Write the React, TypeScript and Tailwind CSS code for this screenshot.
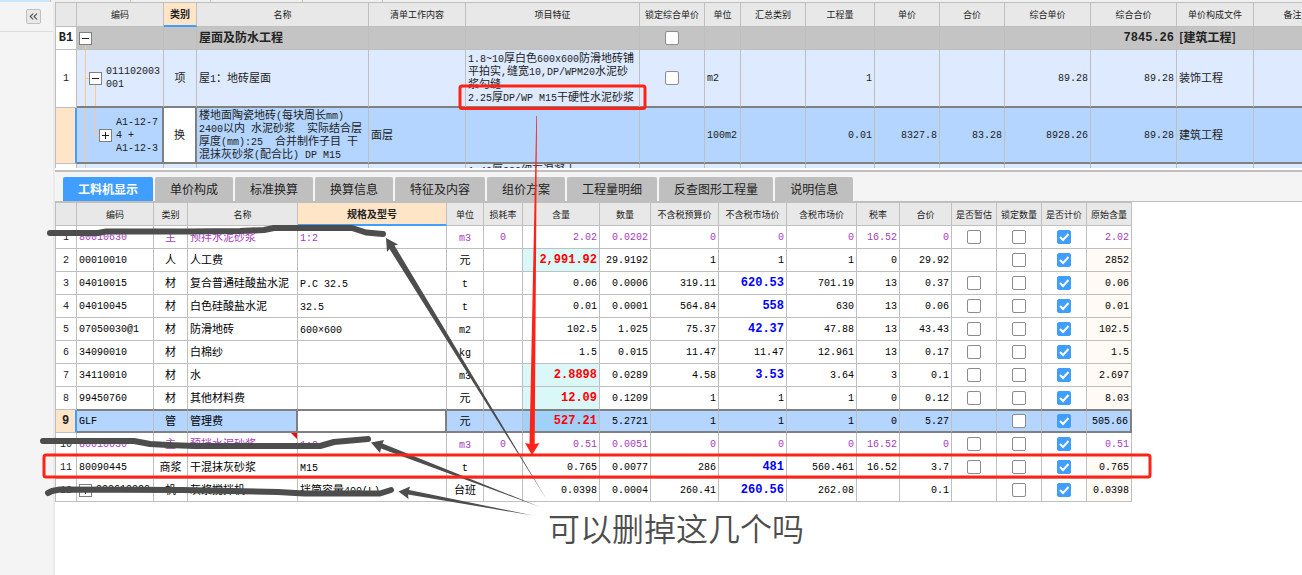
import { useState, type ReactNode } from 'react';
import clsx from 'clsx';
import { ChevronsLeft } from 'lucide-react';

type Column = { title: string; width: string; active?: boolean };

type Material = {
  no: number;
  code: string;
  kind: string;
  name: string;
  spec?: string;
  unit: string;
  loss?: string;
  content: string;
  contentEdited?: boolean;
  amount: string;
  budget: string;
  market: string;
  marketEdited?: boolean;
  taxed: string;
  rate?: string;
  total: string;
  estimate: boolean;
  original: string;
  main?: boolean;
  expandable?: boolean;
  noted?: boolean;
};

const billColumns: Column[] = [
  { title: '', width: 'w-[21px]' },
  { title: '编码', width: 'w-[87px]' },
  { title: '类别', width: 'w-[33px]', active: true },
  { title: '名称', width: 'w-[172px]' },
  { title: '清单工作内容', width: 'w-[97px]' },
  { title: '项目特征', width: 'w-[174px]' },
  { title: '锁定综合单价', width: 'w-[65px]' },
  { title: '单位', width: 'w-[36px]' },
  { title: '汇总类别', width: 'w-[65px]' },
  { title: '工程量', width: 'w-[69px]' },
  { title: '单价', width: 'w-[65px]' },
  { title: '合价', width: 'w-[65px]' },
  { title: '综合单价', width: 'w-[86px]' },
  { title: '综合合价', width: 'w-[86px]' },
  { title: '单价构成文件', width: 'w-[77px]' },
  { title: '备注', width: 'w-[78px]' },
];

const materialColumns: Column[] = [
  { title: '', width: 'w-[21px]' },
  { title: '编码', width: 'w-[77px]' },
  { title: '类别', width: 'w-[34px]' },
  { title: '名称', width: 'w-[110px]' },
  { title: '规格及型号', width: 'w-[149px]', active: true },
  { title: '单位', width: 'w-[37px]' },
  { title: '损耗率', width: 'w-[39px]' },
  { title: '含量', width: 'w-[77px]' },
  { title: '数量', width: 'w-[51px]' },
  { title: '不含税预算价', width: 'w-[68px]' },
  { title: '不含税市场价', width: 'w-[68px]' },
  { title: '含税市场价', width: 'w-[70px]' },
  { title: '税率', width: 'w-[43px]' },
  { title: '合价', width: 'w-[52px]' },
  { title: '是否暂估', width: 'w-[45px]' },
  { title: '锁定数量', width: 'w-[45px]' },
  { title: '是否计价', width: 'w-[45px]' },
  { title: '原始含量', width: 'w-[45px]' },
];

const materials: Material[] = [
  { no: 1, code: '80010630', kind: '主', name: '预拌水泥砂浆', spec: '1:2', unit: 'm3', loss: '0', content: '2.02', amount: '0.0202', budget: '0', market: '0', taxed: '0', rate: '16.52', total: '0', estimate: true, original: '2.02', main: true },
  { no: 2, code: '00010010', kind: '人', name: '人工费', unit: '元', content: '2,991.92', contentEdited: true, amount: '29.9192', budget: '1', market: '1', taxed: '1', rate: '0', total: '29.92', estimate: false, original: '2852' },
  { no: 3, code: '04010015', kind: '材', name: '复合普通硅酸盐水泥', spec: 'P.C 32.5', unit: 't', content: '0.06', amount: '0.0006', budget: '319.11', market: '620.53', marketEdited: true, taxed: '701.19', rate: '13', total: '0.37', estimate: true, original: '0.06' },
  { no: 4, code: '04010045', kind: '材', name: '白色硅酸盐水泥', spec: '32.5', unit: 't', content: '0.01', amount: '0.0001', budget: '564.84', market: '558', marketEdited: true, taxed: '630', rate: '13', total: '0.06', estimate: true, original: '0.01' },
  { no: 5, code: '07050030@1', kind: '材', name: '防滑地砖', spec: '600×600', unit: 'm2', content: '102.5', amount: '1.025', budget: '75.37', market: '42.37', marketEdited: true, taxed: '47.88', rate: '13', total: '43.43', estimate: true, original: '102.5' },
  { no: 6, code: '34090010', kind: '材', name: '白棉纱', unit: 'kg', content: '1.5', amount: '0.015', budget: '11.47', market: '11.47', taxed: '12.961', rate: '13', total: '0.17', estimate: true, original: '1.5' },
  { no: 7, code: '34110010', kind: '材', name: '水', unit: 'm3', content: '2.8898', contentEdited: true, amount: '0.0289', budget: '4.58', market: '3.53', marketEdited: true, taxed: '3.64', rate: '3', total: '0.1', estimate: true, original: '2.697' },
  { no: 8, code: '99450760', kind: '材', name: '其他材料费', unit: '元', content: '12.09', contentEdited: true, amount: '0.1209', budget: '1', market: '1', taxed: '1', rate: '0', total: '0.12', estimate: true, original: '8.03' },
  { no: 9, code: 'GLF', kind: '管', name: '管理费', unit: '元', content: '527.21', contentEdited: true, amount: '5.2721', budget: '1', market: '1', taxed: '1', rate: '0', total: '5.27', estimate: false, original: '505.66' },
  { no: 10, code: '80010630', kind: '主', name: '预拌水泥砂浆', spec: '1:2', unit: 'm3', loss: '0', content: '0.51', amount: '0.0051', budget: '0', market: '0', taxed: '0', rate: '16.52', total: '0', estimate: true, original: '0.51', main: true, noted: true },
  { no: 11, code: '80090445', kind: '商浆', name: '干混抹灰砂浆', spec: 'M15', unit: 't', content: '0.765', amount: '0.0077', budget: '286', market: '481', marketEdited: true, taxed: '560.461', rate: '16.52', total: '3.7', estimate: true, original: '0.765' },
  { no: 12, code: '990610020', kind: '机', name: '灰浆搅拌机', spec: '拌筒容量400(L)', unit: '台班', content: '0.0398', amount: '0.0004', budget: '260.41', market: '260.56', marketEdited: true, taxed: '262.08', total: '0.1', estimate: false, original: '0.0398', expandable: true },
];

const tabs = ['工料机显示', '单价构成', '标准换算', '换算信息', '特征及内容', '组价方案', '工程量明细', '反查图形工程量', '说明信息'];

const SELECTED = 9;

// Latin runs are set half as wide as the Chinese characters around them.
// leading-0 keeps the second font from stretching the line box.
function Mixed({ text }: { text: string }) {
  return (
    <>
      {text.split(/([\x20-\x7e×]+)/).map((part, i) =>
        i % 2 ? (
          <span key={i} className="font-['Liberation_Mono',monospace] text-[10px] leading-0">{part}</span>
        ) : (
          part
        )
      )}
    </>
  );
}

function Num({ value, bold }: { value?: string; bold?: boolean }) {
  return (
    <span className={clsx("font-['Liberation_Mono',monospace] leading-[inherit]", bold ? 'text-[12px] font-bold' : 'text-[10px]')}>
      {value}
    </span>
  );
}

function Check({ label, checked = false }: { label: string; checked?: boolean }) {
  return (
    <span className="relative mx-auto block size-3.5">
      <input
        type="checkbox"
        aria-label={label}
        defaultChecked={checked}
        className="peer block size-3.5 appearance-none rounded-xs border border-[#8c8c8c] bg-white checked:border-[#409eff] checked:bg-[#409eff]"
      />
      <svg viewBox="0 0 14 14" className="pointer-events-none absolute inset-0 hidden size-3.5 peer-checked:block">
        <path d="M3 7l3 3 5.5-6" fill="none" stroke="#fff" strokeWidth="2" />
      </svg>
    </span>
  );
}

function Expander({ open, label }: { open?: boolean; label: string }) {
  return (
    <button type="button" aria-label={label} className="relative block size-[13px] shrink-0 border border-[#808080] bg-white">
      <svg viewBox="0 0 11 11" className="block size-[11px]">
        <path d={open ? 'M2 5.5h7' : 'M2 5.5h7M5.5 2v7'} stroke="#222" strokeWidth="1" />
      </svg>
    </button>
  );
}

function Head({ columns, height }: { columns: Column[]; height: string }) {
  return (
    <>
      <colgroup>
        {columns.map((c, i) => (
          <col key={i} className={c.width} />
        ))}
      </colgroup>
      <thead>
        <tr className={height}>
          {columns.map((c, i) => (
            <th
              key={i}
              className={clsx(
                'border-r border-r-[#bfbfbf] p-0 text-center whitespace-nowrap',
                c.active
                  ? 'border-b-2 border-b-[#409eff] bg-[#ffe5c8] text-[10px] font-bold'
                  : 'border-b border-b-[#bfbfbf] bg-[#e8e8e8] text-[9px] font-normal'
              )}
            >
              {c.title}
            </th>
          ))}
        </tr>
      </thead>
    </>
  );
}

// flush: cells that hold a control instead of text
function Cell({ className, flush, children }: { className?: string; flush?: boolean; children?: ReactNode }) {
  return (
    <td className={clsx('border-r border-b border-[#bfbfbf] px-0.5 pt-0', flush ? 'pb-0' : 'pb-0.5', className)}>
      {children}
    </td>
  );
}

const guide = 'absolute bg-[#fcc98a]';

function BillTable() {
  const picked = 'border-b-2 border-b-[#808080]';
  return (
    <table className="w-px table-fixed border-separate border-spacing-0 border-t border-l border-[#bfbfbf]">
      <Head columns={billColumns} height="h-6" />
      <tbody>
        <tr className="h-[23px] bg-[#c4c4c4]">
          <Cell className="bg-white text-center"><Num value="B1" bold /></Cell>
          <Cell flush className="relative">
            <Expander open label="收起 屋面及防水工程" />
            <span className={clsx(guide, 'bottom-0 left-2 h-1 w-px')} />
          </Cell>
          <Cell />
          <Cell className="text-xs leading-none font-bold">屋面及防水工程</Cell>
          <Cell />
          <Cell />
          <Cell flush><Check label="锁定综合单价 B1" /></Cell>
          <Cell />
          <Cell />
          <Cell />
          <Cell />
          <Cell />
          <Cell />
          <Cell className="text-right"><Num value="7845.26" bold /></Cell>
          <Cell className="text-xs leading-none font-bold whitespace-nowrap">[建筑工程]</Cell>
          <Cell />
        </tr>
        <tr className="h-[58px] bg-[#deeaff]">
          <Cell className="bg-white text-center"><Num value="1" /></Cell>
          <Cell flush className={clsx('relative', picked)}>
            <span className={clsx(guide, 'inset-y-0 left-2 w-px')} />
            <span className={clsx(guide, 'top-1/2 left-2 h-px w-1')} />
            <span className={clsx(guide, 'top-1/2 bottom-0 left-[18px] w-px')} />
            <div className="flex items-center gap-1 pl-2.5">
              <Expander open label="收起 011102003001" />
              <span className="w-14 font-['Liberation_Mono',monospace] text-[10px] leading-[13px] break-all">011102003001</span>
            </div>
          </Cell>
          <Cell className={clsx('text-center', picked)}>项</Cell>
          <Cell className={picked}><Mixed text="屋1：地砖屋面" /></Cell>
          <Cell className={picked} />
          <Cell className={clsx('leading-[13px] whitespace-pre', picked)}>
            <Mixed text={'1.8~10厚白色600x600防滑地砖铺\n平拍实,缝宽10,DP/WPM20水泥砂\n浆勾缝\n2.25厚DP/WP M15干硬性水泥砂浆'} />
          </Cell>
          <Cell flush className={picked}><Check label="锁定综合单价 1" /></Cell>
          <Cell className={picked}><Num value="m2" /></Cell>
          <Cell className={picked} />
          <Cell className={clsx('text-right', picked)}><Num value="1" /></Cell>
          <Cell className={picked} />
          <Cell className={picked} />
          <Cell className={clsx('text-right', picked)}><Num value="89.28" /></Cell>
          <Cell className={clsx('text-right', picked)}><Num value="89.28" /></Cell>
          <Cell className={picked}>装饰工程</Cell>
          <Cell className={picked} />
        </tr>
        <tr className="h-14 bg-[#b3d5ff]">
          <Cell className="border-r-2 border-r-[#409eff] bg-[#ffe5c8]" />
          <Cell flush className={clsx('relative border-r-2 border-r-[#808080]', picked)}>
            <span className={clsx(guide, 'inset-y-0 left-2 w-px')} />
            <span className={clsx(guide, 'top-0 bottom-1/2 left-[18px] w-px')} />
            <span className={clsx(guide, 'top-1/2 left-[18px] h-px w-1')} />
            <div className="flex items-center gap-1 pl-5">
              <Expander label="展开 A1-12-74" />
              <span className="font-['Liberation_Mono',monospace] text-[10px] leading-[13px] whitespace-pre">
                {'A1-12-7\n4 +\nA1-12-3'}
              </span>
            </div>
          </Cell>
          <Cell className={clsx('border-r-2 border-r-[#808080] bg-white text-center', picked)}>换</Cell>
          <Cell className={clsx('leading-[13px] whitespace-pre', picked)}>
            <Mixed text={'楼地面陶瓷地砖(每块周长mm)\n2400以内 水泥砂浆  实际结合层\n厚度(mm):25  合并制作子目 干\n混抹灰砂浆(配合比) DP M15'} />
          </Cell>
          <Cell className={picked}>面层</Cell>
          <Cell className={picked} />
          <Cell className={picked} />
          <Cell className={picked}><Num value="100m2" /></Cell>
          <Cell className={picked} />
          <Cell className={clsx('text-right', picked)}><Num value="0.01" /></Cell>
          <Cell className={clsx('text-right', picked)}><Num value="8327.8" /></Cell>
          <Cell className={clsx('text-right', picked)}><Num value="83.28" /></Cell>
          <Cell className={clsx('text-right', picked)}><Num value="8928.26" /></Cell>
          <Cell className={clsx('text-right', picked)}><Num value="89.28" /></Cell>
          <Cell className={picked}>建筑工程</Cell>
          <Cell className={picked} />
        </tr>
        {/* next item, scrolled out of the pane except for its top edge */}
        <tr className="h-14 bg-[#deeaff]">
          <Cell className="bg-white" />
          <Cell className="relative">
            <span className={clsx(guide, 'inset-y-0 left-2 w-px')} />
          </Cell>
          <Cell />
          <Cell />
          <Cell />
          <Cell className="align-top whitespace-pre"><Mixed text="1.40厚C20细石混凝土" /></Cell>
          <Cell />
          <Cell />
          <Cell />
          <Cell />
          <Cell />
          <Cell />
          <Cell />
          <Cell />
          <Cell />
          <Cell />
        </tr>
      </tbody>
    </table>
  );
}

function MaterialRow({ row }: { row: Material }) {
  const selected = row.no === SELECTED;
  const edge = clsx(
    selected && 'border-t border-t-[#808080] border-b-2 border-b-[#808080]',
    row.no === SELECTED - 1 && 'border-b-[#808080]'
  );
  const right = clsx('text-right', edge);
  const center = clsx('text-center', edge);

  return (
    <tr className={clsx('h-[23px]', selected && 'bg-[#b3d5ff]', row.main ? 'text-[#a63cc0]' : 'text-black')}>
      <Cell className={clsx('text-center text-[#222]', selected && 'border-r-2 border-r-[#409eff] bg-[#ffe5c8]')}>
        <Num value={String(row.no)} bold={selected} />
      </Cell>
      <Cell flush={row.expandable} className={edge}>
        {row.expandable ? (
          <div className="flex items-center gap-1">
            <Expander label={`展开 ${row.code}`} />
            <Num value={row.code} />
          </div>
        ) : (
          <Num value={row.code} />
        )}
      </Cell>
      <Cell className={center}>{row.kind}</Cell>
      <Cell className={clsx('relative whitespace-nowrap', edge, selected && 'border-r-2 border-r-[#808080]')}>
        {row.name}
        {row.noted && (
          <svg viewBox="0 0 6 6" className="absolute top-0 right-0 size-1.5">
            <path d="M0 0h6v6z" fill="#f00" />
          </svg>
        )}
      </Cell>
      <Cell className={clsx('whitespace-nowrap', edge, selected && 'border-r-2 border-r-[#808080] bg-white')}>
        <Mixed text={row.spec ?? ''} />
      </Cell>
      <Cell className={center}><Mixed text={row.unit} /></Cell>
      <Cell className={center}><Num value={row.loss} /></Cell>
      <Cell
        className={clsx(
          right,
          row.contentEdited && 'text-[#f00]',
          row.contentEdited && (selected ? 'bg-[#9fd1f9]' : 'bg-[#dbf8f8]')
        )}
      >
        <Num value={row.content} bold={row.contentEdited} />
      </Cell>
      <Cell className={right}><Num value={row.amount} /></Cell>
      <Cell className={right}><Num value={row.budget} /></Cell>
      <Cell className={clsx(right, row.marketEdited && 'text-[#00f]')}>
        <Num value={row.market} bold={row.marketEdited} />
      </Cell>
      <Cell className={right}><Num value={row.taxed} /></Cell>
      <Cell className={right}><Num value={row.rate} /></Cell>
      <Cell className={right}><Num value={row.total} /></Cell>
      <Cell flush className={edge}>{row.estimate && <Check label={`是否暂估 ${row.no}`} />}</Cell>
      <Cell flush className={edge}><Check label={`锁定数量 ${row.no}`} /></Cell>
      <Cell flush className={edge}><Check label={`是否计价 ${row.no}`} checked /></Cell>
      <Cell
        className={clsx(
          right,
          selected ? 'border-r-2 border-r-[#808080]' : !row.main && 'bg-[#fffaf4]'
        )}
      >
        <Num value={row.original} />
      </Cell>
    </tr>
  );
}

function Annotations() {
  return (
    <div className="pointer-events-none absolute top-0 left-0">
      <svg width="1302" height="575" viewBox="0 0 1302 575" fill="none">
        <g stroke="#4d4d4d" strokeWidth="6" strokeLinecap="round" strokeLinejoin="round">
          <path d="M50 233L98 233L106 231.5L187 231.5L240 231L264 230L274 228L352 228L366 232.5L383 234" />
          <path d="M43 441L134 441L150 444L168 445L195 446L320 446L334 442L368 439" />
          <path d="M48 493L52 491L60 489.5L182 490L230 491L278 492L304 493.5L380 493.5L391 490" />
        </g>
        <g fill="#4d4d4d">
          <path d="M386 238L398 244.5L394.5 245.5L547 500L389.5 249L387 252Z" />
          <path d="M371 442.5L384 440L382.5 443.5L540 507L381 448.5L380 453Z" />
          <path d="M398.5 491.5L410 486.5L409 490L533 515.5L408 494.5L408.5 499Z" />
        </g>
        <g stroke="#ff2216" strokeWidth="3">
          <rect x="460" y="86" width="185" height="22.5" rx="2" />
          <rect x="44" y="455" width="1106" height="22" rx="2" />
        </g>
        <path d="M536.3 116L537 116L534.7 444L539.5 443L532 455L525 443L529.5 444Z" fill="#ff2216" />
      </svg>
      <p className="absolute top-[507px] left-[548px] text-[32px] leading-[40px] font-[350] whitespace-nowrap text-[#4d4d4d]">
        可以删掉这几个吗
      </p>
    </div>
  );
}

export default function App() {
  const [tab, setTab] = useState(tabs[0]);

  return (
    <div className="relative flex min-h-screen flex-col overflow-hidden bg-white font-['Noto_Sans_CJK_SC',sans-serif] text-[11px] leading-none text-[#222]">
      <div className="flex h-0.5 bg-[#f0f0f0]">
        <span className="w-[51px] border-r border-[#bfbfbf] bg-[#cce8ff]" />
        <span className="w-20 border-r border-[#bfbfbf]" />
        <span className="w-20 border-r border-[#bfbfbf]" />
        <span className="w-[92px] border-r border-[#bfbfbf]" />
        <span className="w-20 border-r border-[#bfbfbf]" />
      </div>

      <div className="flex flex-1">
        <aside className="w-[55px] shrink-0 border-r-2 border-[#ebebeb] bg-[#f4f4f4]">
          <div className="flex h-[30px] justify-end border-b border-[#dcdcdc] pt-[7px] pr-3">
            <button
              type="button"
              aria-label="收起侧栏"
              className="flex size-[15px] items-center justify-center rounded-xs border border-[#bfbfbf] bg-[#e8e8e8] text-[#555]"
            >
              <ChevronsLeft size={13} strokeWidth={2} />
            </button>
          </div>
        </aside>

        <main className="min-w-0 flex-1">
          <section className="h-[166px] overflow-hidden">
            <BillTable />
          </section>

          <nav className="mt-0.5 flex gap-0.5 border-t-2 border-b border-[#bfbfbf] bg-[#f4f4f4] pt-[5px] pl-2">
            {tabs.map((t) => (
              <button
                key={t}
                type="button"
                onClick={() => setTab(t)}
                className={clsx(
                  'h-6 shrink-0 rounded-t-xs px-[15px] text-xs whitespace-nowrap',
                  t === tab ? 'bg-[#409eff] font-bold text-white' : 'bg-[#bfbfbf]'
                )}
              >
                {t}
              </button>
            ))}
          </nav>

          <section className="overflow-hidden">
            <table className="w-px table-fixed border-separate border-spacing-0 border-t border-l border-[#bfbfbf]">
              <Head columns={materialColumns} height="h-[23px]" />
              <tbody>
                {materials.map((row) => (
                  <MaterialRow key={row.no} row={row} />
                ))}
              </tbody>
            </table>
          </section>
        </main>
      </div>

      <Annotations />
    </div>
  );
}
